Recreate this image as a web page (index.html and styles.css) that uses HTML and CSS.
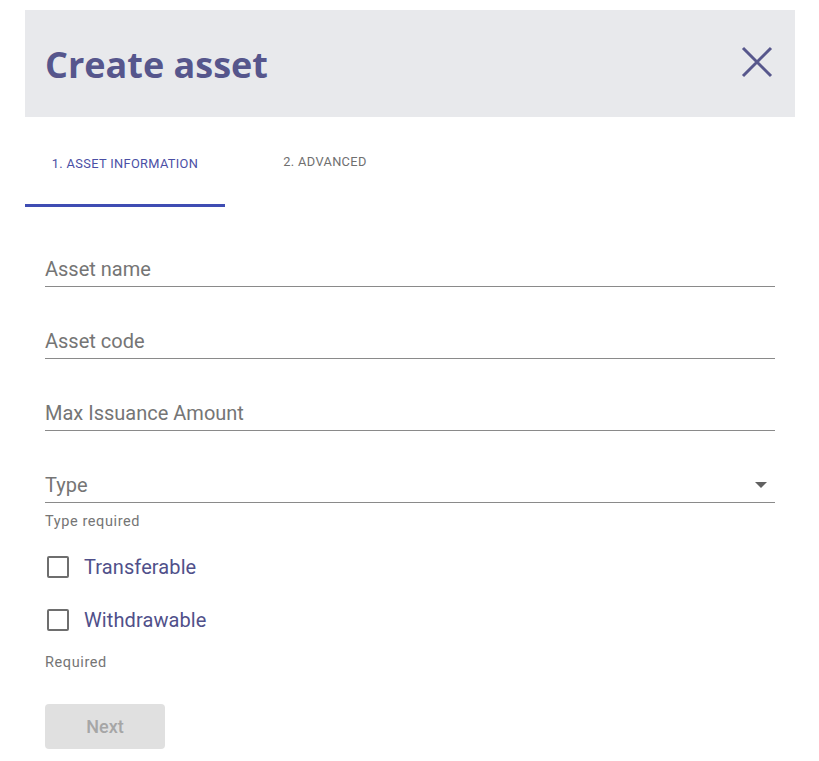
FILE: index.html
```html
<!DOCTYPE html>
<html>
<head>
<meta charset="utf-8">
<link rel="stylesheet" href="styles.css">
</head>
<body>
<div class="dialog">
  <header class="head">
    <h1 class="title">Create asset</h1>
    <button class="close" aria-label="close">
      <svg width="32" height="32" viewBox="0 0 32 32"><path d="M2 2 L30 30 M30 2 L2 30" stroke="#57578c" stroke-width="3" fill="none"/></svg>
    </button>
  </header>
  <nav class="tabs">
    <div class="tab active">1. ASSET INFORMATION</div>
    <div class="tab">2. ADVANCED</div>
  </nav>
  <form class="form">
    <div class="field"><span class="label">Asset name</span></div>
    <div class="field"><span class="label">Asset code</span></div>
    <div class="field"><span class="label">Max Issuance Amount</span></div>
    <div class="field select"><span class="label">Type</span><span class="arrow"></span></div>
    <div class="hint">Type required</div>
    <label class="check"><span class="box"></span><span class="check-label">Transferable</span></label>
    <label class="check"><span class="box"></span><span class="check-label">Withdrawable</span></label>
    <div class="hint hint2">Required</div>
    <button type="button" class="next">Next</button>
  </form>
</div>
</body>
</html>
```
FILE: styles.css
```css
html, body { margin: 0; padding: 0; background: #fff; }
body { font-family: Roboto, "Liberation Sans", sans-serif; }
.dialog { margin: 10px 24px 0 25px; width: 770px; }
.head {
  background: #e8e9ec;
  height: 107px;
  display: flex;
  align-items: center;
  justify-content: space-between;
  padding: 0 22px 0 20px;
  box-sizing: border-box;
}
.title {
  margin: 0;
  font-family: "Open Sans", "Noto Sans", sans-serif;
  font-weight: 700;
  font-size: 36px;
  color: #56568c;
  position: relative;
  top: 1px;
}
.close { background: none; border: 0; padding: 0; width: 32px; height: 32px; display: block; position: relative; top: -2px; }
.close svg { display: block; }
.tabs { display: flex; height: 90px; }
.tab {
  width: 200px;
  box-sizing: border-box;
  padding-top: 39px;
  text-align: center;
  font-size: 12.8px;
  font-weight: 400;
  color: #6f6f6f;
  letter-spacing: 0.35px;
}
.tab:nth-child(2) { padding-top: 37px; }
.tab.active { color: #4a4fa5; border-bottom: 3px solid #3f4db3; height: 90px; }
.form { padding: 0 20px; display: flex; flex-direction: column; }
.field {
  height: 36px;
  border-bottom: 1px solid #8a8a8a;
  display: flex;
  align-items: flex-end;
  justify-content: space-between;
  font-size: 20px;
  color: #757575;
  box-sizing: border-box;
  padding-bottom: 6px;
  margin-top: 36px;
}
.field:first-child { margin-top: 44px; }
.field .label { line-height: 22px; }
.arrow {
  width: 0; height: 0;
  border-left: 6px solid transparent;
  border-right: 6px solid transparent;
  border-top: 6px solid #616161;
  margin-right: 8px;
  margin-bottom: 8px;
}
.hint { font-size: 14.5px; color: #757575; margin-top: 10px; letter-spacing: 0.6px; line-height: 18px; }
.check { display: flex; align-items: center; height: 24px; margin-top: 24px; }
.check + .check { margin-top: 29px; }
.hint2 { margin-top: 22px; }
.box {
  width: 18px; height: 18px;
  border: 2px solid #6e6e6e;
  border-radius: 2px;
  margin-left: 2px;
  margin-right: 15px;
}
.check-label { font-size: 20px; color: #50508a; letter-spacing: 0.1px; }
.next {
  margin-top: 32px;
  width: 120px;
  height: 45px;
  border: 0;
  border-radius: 4px;
  background: #e0e0e0;
  color: #a6a6a6;
  font-family: Roboto, sans-serif;
  font-weight: 500;
  font-size: 18px;
}
```
